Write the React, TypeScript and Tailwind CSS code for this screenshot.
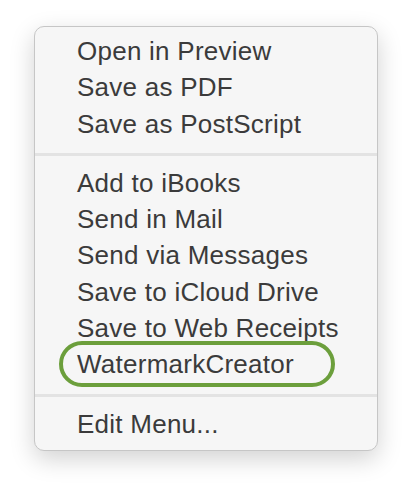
import React from "react";

const groups: string[][] = [
	["Open in Preview", "Save as PDF", "Save as PostScript"],
	[
		"Add to iBooks",
		"Send in Mail",
		"Send via Messages",
		"Save to iCloud Drive",
		"Save to Web Receipts",
		"WatermarkCreator",
	],
	["Edit Menu..."],
];

function MenuItem({label, highlighted}: {label: string; highlighted?: boolean}) {
	return (
		<div className="relative h-[36.3px] pl-[42px] leading-[36.3px] whitespace-nowrap">
			{highlighted && (
				<div className="absolute left-[24px] -top-[5px] h-[46px] w-[276px] rounded-full border-[4px] border-[#6c9f3c]"/>
			)}
			<span className="relative">{label}</span>
		</div>
	);
}

export default function App() {
	return (
		<div className="h-[492px] w-[412px] bg-white pl-[34px] pt-[26px]"
			 style={{fontFamily: '"Liberation Sans", Arial, sans-serif'}}>
			<div className="w-[344px] rounded-[10px] border border-[#c6c6c6] bg-[#f6f6f6] pt-[6px] pb-[8px] text-[26px] tracking-[0.25px] text-[#3b3b3b] shadow-[0_8px_24px_rgba(0,0,0,0.18)]">
				{groups.map((group, gi) => (
					<div key={gi}>
						{gi > 0 && <div className="mt-[11px] mb-[9px] h-[3px] bg-[#e3e3e3]"/>}
						{group.map((label) => (
							<MenuItem key={label} label={label} highlighted={label === "WatermarkCreator"}/>
						))}
					</div>
				))}
			</div>
		</div>
	);
}
